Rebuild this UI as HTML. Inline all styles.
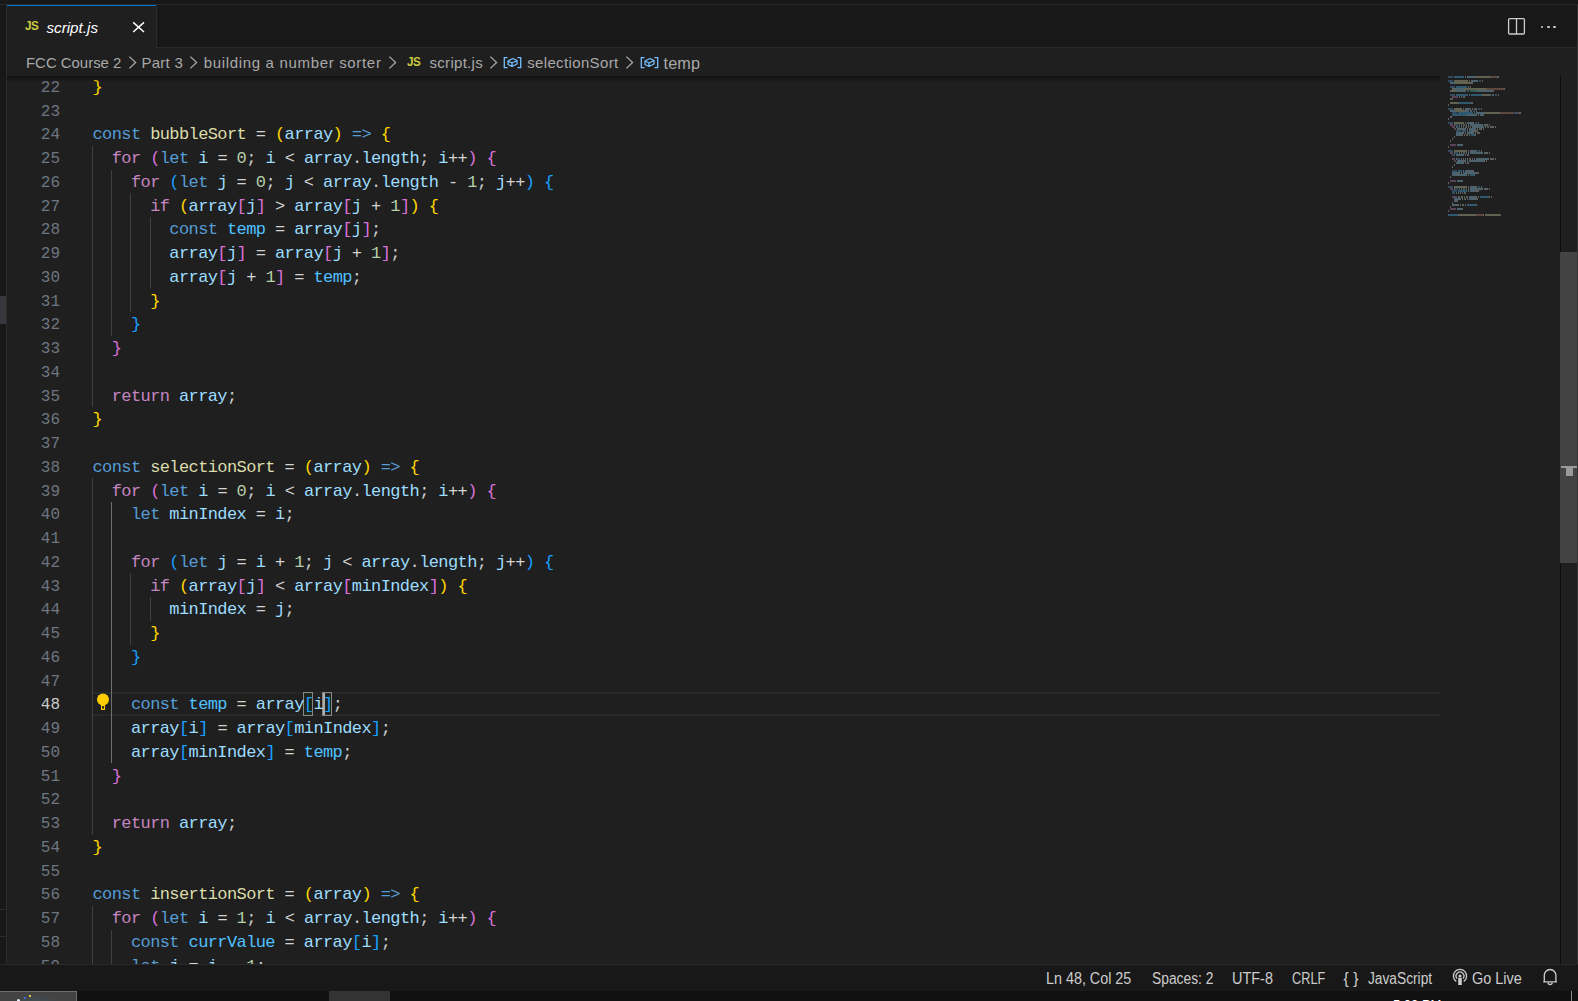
<!DOCTYPE html>
<html><head><meta charset="utf-8"><style>
html,body{margin:0;padding:0;}
body{width:1578px;height:1001px;overflow:hidden;background:#1f1f1f;position:relative;font-family:"Liberation Sans",sans-serif;}
.a{position:absolute;}
.code{position:absolute;left:0;top:0;font-family:"Liberation Mono",monospace;font-size:17px;letter-spacing:-0.6px;white-space:pre;line-height:23.75px;height:23.75px;}
.ln{position:absolute;left:0;width:60.0px;text-align:right;font-family:"Liberation Mono",monospace;font-size:16px;line-height:23.75px;color:#6E7681;white-space:pre;}
.bc{position:absolute;top:0;height:28px;line-height:28px;color:#A9A9A9;font-size:15px;white-space:pre;}
.sb{position:absolute;top:965px;height:26px;line-height:26px;color:#CCCCCC;font-size:14.5px;white-space:pre;}
</style></head><body>

<div class="a" style="left:0;top:0;width:1578px;height:5px;background:#181818"></div>
<div class="a" style="left:0;top:4px;width:1578px;height:1px;background:#2b2b2b"></div>
<div class="a" style="left:0;top:5px;width:6px;height:986px;background:#181818"></div>
<div class="a" style="left:6px;top:5px;width:1px;height:959px;background:#2b2b2b"></div>
<div class="a" style="left:0;top:296px;width:6px;height:28px;background:#37373d"></div>
<div class="a" style="left:0;top:909px;width:6px;height:1px;background:#2b2b2b"></div>
<div class="a" style="left:0;top:936px;width:6px;height:1px;background:#2b2b2b"></div>
<div class="a" style="left:157px;top:5px;width:1421px;height:42px;background:#181818"></div>
<div class="a" style="left:157px;top:47px;width:1421px;height:1px;background:#2b2b2b"></div>
<div class="a" style="left:156px;top:5px;width:1px;height:43px;background:#2b2b2b"></div>
<div class="a" style="left:7px;top:5px;width:149px;height:1px;background:#0078d4"></div>
<div class="a" style="left:24.6px;top:15.6px;height:20px;line-height:20px;font-size:13.6px;font-weight:bold;color:#cbcb41;letter-spacing:-0.6px;transform:scaleX(0.86);transform-origin:0 0">JS</div>
<div class="a" style="left:46.5px;top:17px;height:22px;line-height:22px;font-size:15.2px;font-style:italic;color:#ffffff">script.js</div>
<svg class="a" style="left:131px;top:20px" width="15" height="15" viewBox="0 0 15 15"><path d="M2.2 2.4 L13 12 M13 2.4 L2.2 12" stroke="#ffffff" stroke-width="1.5" fill="none"/></svg>
<svg class="a" style="left:1506px;top:16px" width="21" height="21" viewBox="0 0 21 21"><rect x="2.6" y="2.6" width="15.8" height="15.4" rx="1" ry="1" stroke="#cccccc" stroke-width="1.3" fill="none"/><line x1="10.5" y1="2.6" x2="10.5" y2="18" stroke="#cccccc" stroke-width="1.3"/></svg>
<div class="a" style="left:1540.9px;top:25.7px;width:2.6px;height:2.6px;border-radius:50%;background:#cccccc"></div>
<div class="a" style="left:1547.1000000000001px;top:25.7px;width:2.6px;height:2.6px;border-radius:50%;background:#cccccc"></div>
<div class="a" style="left:1553.3px;top:25.7px;width:2.6px;height:2.6px;border-radius:50%;background:#cccccc"></div>
<div class="bc" style="left:26.31px;top:49.3px;font-size:15px;letter-spacing:0.0px;transform:scaleX(0.9945);transform-origin:0 0">FCC Course 2</div>
<div class="bc" style="left:141.40px;top:49.3px;font-size:15px;letter-spacing:0.285px;transform:scaleX(1.0);transform-origin:0 0">Part 3</div>
<div class="bc" style="left:203.70px;top:49.3px;font-size:15px;letter-spacing:0.671px;transform:scaleX(1.0);transform-origin:0 0">building a number sorter</div>
<div class="bc" style="left:429.50px;top:49.3px;font-size:15px;letter-spacing:0.295px;transform:scaleX(1.0);transform-origin:0 0">script.js</div>
<div class="bc" style="left:527.20px;top:49.3px;font-size:15px;letter-spacing:0.355px;transform:scaleX(1.0);transform-origin:0 0">selectionSort</div>
<div class="bc" style="left:663.50px;top:49.3px;font-size:16.2px;letter-spacing:0.172px;transform:scaleX(1.0);transform-origin:0 0">temp</div>
<svg class="a" style="left:128.0px;top:55px" width="10" height="16" viewBox="0 0 10 16"><path d="M1.4 1.6 L7.6 7.5 L1.4 13.4" stroke="#A9A9A9" stroke-width="1.3" fill="none"/></svg>
<svg class="a" style="left:189.2px;top:55px" width="10" height="16" viewBox="0 0 10 16"><path d="M1.4 1.6 L7.6 7.5 L1.4 13.4" stroke="#A9A9A9" stroke-width="1.3" fill="none"/></svg>
<svg class="a" style="left:388.4px;top:55px" width="10" height="16" viewBox="0 0 10 16"><path d="M1.4 1.6 L7.6 7.5 L1.4 13.4" stroke="#A9A9A9" stroke-width="1.3" fill="none"/></svg>
<svg class="a" style="left:489.0px;top:55px" width="10" height="16" viewBox="0 0 10 16"><path d="M1.4 1.6 L7.6 7.5 L1.4 13.4" stroke="#A9A9A9" stroke-width="1.3" fill="none"/></svg>
<svg class="a" style="left:625.0px;top:55px" width="10" height="16" viewBox="0 0 10 16"><path d="M1.4 1.6 L7.6 7.5 L1.4 13.4" stroke="#A9A9A9" stroke-width="1.3" fill="none"/></svg>
<div class="a" style="left:406.7px;top:51.6px;height:20px;line-height:20px;font-size:13.6px;font-weight:bold;color:#cbcb41;letter-spacing:-0.6px;transform:scaleX(0.86);transform-origin:0 0">JS</div>
<svg class="a" style="left:503.3px;top:55px" width="19" height="15" viewBox="0 0 19 15"><path d="M4.5 2.7 H1.3 V12.6 H4.5 M14.5 2.7 H17.7 V12.6 H14.5" stroke="#75BEFF" stroke-width="1.3" fill="none"/><path d="M5 6 L10 3.5 L14 5.5 V9 L9 11.5 L5 9.5 Z M5 6 L9 8 L14 5.5 M9 8 V11.5" stroke="#75BEFF" stroke-width="1.3" fill="none" stroke-linejoin="round"/></svg>
<svg class="a" style="left:639.5px;top:55px" width="19" height="15" viewBox="0 0 19 15"><path d="M4.5 2.7 H1.3 V12.6 H4.5 M14.5 2.7 H17.7 V12.6 H14.5" stroke="#75BEFF" stroke-width="1.3" fill="none"/><path d="M5 6 L10 3.5 L14 5.5 V9 L9 11.5 L5 9.5 Z M5 6 L9 8 L14 5.5 M9 8 V11.5" stroke="#75BEFF" stroke-width="1.3" fill="none" stroke-linejoin="round"/></svg>
<div class="a" style="left:7px;top:76px;width:1553px;height:888px;overflow:hidden">
<div class="a" style="left:85.5px;top:616.1px;width:1347.5px;height:23.75px;box-sizing:border-box;border-top:2px solid #282828;border-bottom:2px solid #282828"></div>
<div class="a" style="left:85.00px;top:-48.90px;width:1px;height:23.75px;background:#404040"></div>
<div class="a" style="left:104.20px;top:-48.90px;width:1px;height:23.75px;background:#404040"></div>
<div class="a" style="left:85.00px;top:-25.15px;width:1px;height:23.75px;background:#404040"></div>
<div class="a" style="left:85.00px;top:69.85px;width:1px;height:23.75px;background:#404040"></div>
<div class="a" style="left:85.00px;top:93.60px;width:1px;height:23.75px;background:#404040"></div>
<div class="a" style="left:104.20px;top:93.60px;width:1px;height:23.75px;background:#404040"></div>
<div class="a" style="left:85.00px;top:117.35px;width:1px;height:23.75px;background:#404040"></div>
<div class="a" style="left:104.20px;top:117.35px;width:1px;height:23.75px;background:#404040"></div>
<div class="a" style="left:123.40px;top:117.35px;width:1px;height:23.75px;background:#404040"></div>
<div class="a" style="left:85.00px;top:141.10px;width:1px;height:23.75px;background:#404040"></div>
<div class="a" style="left:104.20px;top:141.10px;width:1px;height:23.75px;background:#404040"></div>
<div class="a" style="left:123.40px;top:141.10px;width:1px;height:23.75px;background:#404040"></div>
<div class="a" style="left:142.60px;top:141.10px;width:1px;height:23.75px;background:#404040"></div>
<div class="a" style="left:85.00px;top:164.85px;width:1px;height:23.75px;background:#404040"></div>
<div class="a" style="left:104.20px;top:164.85px;width:1px;height:23.75px;background:#404040"></div>
<div class="a" style="left:123.40px;top:164.85px;width:1px;height:23.75px;background:#404040"></div>
<div class="a" style="left:142.60px;top:164.85px;width:1px;height:23.75px;background:#404040"></div>
<div class="a" style="left:85.00px;top:188.60px;width:1px;height:23.75px;background:#404040"></div>
<div class="a" style="left:104.20px;top:188.60px;width:1px;height:23.75px;background:#404040"></div>
<div class="a" style="left:123.40px;top:188.60px;width:1px;height:23.75px;background:#404040"></div>
<div class="a" style="left:142.60px;top:188.60px;width:1px;height:23.75px;background:#404040"></div>
<div class="a" style="left:85.00px;top:212.35px;width:1px;height:23.75px;background:#404040"></div>
<div class="a" style="left:104.20px;top:212.35px;width:1px;height:23.75px;background:#404040"></div>
<div class="a" style="left:123.40px;top:212.35px;width:1px;height:23.75px;background:#404040"></div>
<div class="a" style="left:85.00px;top:236.10px;width:1px;height:23.75px;background:#404040"></div>
<div class="a" style="left:104.20px;top:236.10px;width:1px;height:23.75px;background:#404040"></div>
<div class="a" style="left:85.00px;top:259.85px;width:1px;height:23.75px;background:#404040"></div>
<div class="a" style="left:85.00px;top:283.60px;width:1px;height:23.75px;background:#404040"></div>
<div class="a" style="left:85.00px;top:307.35px;width:1px;height:23.75px;background:#404040"></div>
<div class="a" style="left:85.00px;top:402.35px;width:1px;height:23.75px;background:#404040"></div>
<div class="a" style="left:85.00px;top:426.10px;width:1px;height:23.75px;background:#404040"></div>
<div class="a" style="left:104.20px;top:426.10px;width:1px;height:23.75px;background:#707070"></div>
<div class="a" style="left:85.00px;top:449.85px;width:1px;height:23.75px;background:#404040"></div>
<div class="a" style="left:104.20px;top:449.85px;width:1px;height:23.75px;background:#707070"></div>
<div class="a" style="left:85.00px;top:473.60px;width:1px;height:23.75px;background:#404040"></div>
<div class="a" style="left:104.20px;top:473.60px;width:1px;height:23.75px;background:#707070"></div>
<div class="a" style="left:85.00px;top:497.35px;width:1px;height:23.75px;background:#404040"></div>
<div class="a" style="left:104.20px;top:497.35px;width:1px;height:23.75px;background:#707070"></div>
<div class="a" style="left:123.40px;top:497.35px;width:1px;height:23.75px;background:#404040"></div>
<div class="a" style="left:85.00px;top:521.10px;width:1px;height:23.75px;background:#404040"></div>
<div class="a" style="left:104.20px;top:521.10px;width:1px;height:23.75px;background:#707070"></div>
<div class="a" style="left:123.40px;top:521.10px;width:1px;height:23.75px;background:#404040"></div>
<div class="a" style="left:142.60px;top:521.10px;width:1px;height:23.75px;background:#404040"></div>
<div class="a" style="left:85.00px;top:544.85px;width:1px;height:23.75px;background:#404040"></div>
<div class="a" style="left:104.20px;top:544.85px;width:1px;height:23.75px;background:#707070"></div>
<div class="a" style="left:123.40px;top:544.85px;width:1px;height:23.75px;background:#404040"></div>
<div class="a" style="left:85.00px;top:568.60px;width:1px;height:23.75px;background:#404040"></div>
<div class="a" style="left:104.20px;top:568.60px;width:1px;height:23.75px;background:#707070"></div>
<div class="a" style="left:85.00px;top:592.35px;width:1px;height:23.75px;background:#404040"></div>
<div class="a" style="left:104.20px;top:592.35px;width:1px;height:23.75px;background:#707070"></div>
<div class="a" style="left:85.00px;top:616.10px;width:1px;height:23.75px;background:#404040"></div>
<div class="a" style="left:104.20px;top:616.10px;width:1px;height:23.75px;background:#707070"></div>
<div class="a" style="left:85.00px;top:639.85px;width:1px;height:23.75px;background:#404040"></div>
<div class="a" style="left:104.20px;top:639.85px;width:1px;height:23.75px;background:#707070"></div>
<div class="a" style="left:85.00px;top:663.60px;width:1px;height:23.75px;background:#404040"></div>
<div class="a" style="left:104.20px;top:663.60px;width:1px;height:23.75px;background:#707070"></div>
<div class="a" style="left:85.00px;top:687.35px;width:1px;height:23.75px;background:#404040"></div>
<div class="a" style="left:85.00px;top:711.10px;width:1px;height:23.75px;background:#404040"></div>
<div class="a" style="left:85.00px;top:734.85px;width:1px;height:23.75px;background:#404040"></div>
<div class="a" style="left:85.00px;top:829.85px;width:1px;height:23.75px;background:#404040"></div>
<div class="a" style="left:85.00px;top:853.60px;width:1px;height:23.75px;background:#404040"></div>
<div class="a" style="left:104.20px;top:853.60px;width:1px;height:23.75px;background:#404040"></div>
<div class="a" style="left:85.00px;top:877.35px;width:1px;height:23.75px;background:#404040"></div>
<div class="a" style="left:104.20px;top:877.35px;width:1px;height:23.75px;background:#404040"></div>
<div class="a" style="left:85.00px;top:901.10px;width:1px;height:23.75px;background:#404040"></div>
<div class="a" style="left:104.20px;top:901.10px;width:1px;height:23.75px;background:#404040"></div>
<div class="a" style="left:296.10px;top:616.30px;width:10px;height:23.5px;box-sizing:border-box;border:1px solid #888888;background:rgba(0,100,0,0.1)"></div>
<div class="a" style="left:315.30px;top:616.30px;width:10px;height:23.5px;box-sizing:border-box;border:1px solid #888888;background:rgba(0,100,0,0.1)"></div>
<div class="ln" style="top:0.90px;left:-7px;color:#6E7681">22</div>
<div class="code" style="left:85.5px;top:-0.10px"><span style="color:#FFD700">}</span></div>
<div class="ln" style="top:24.65px;left:-7px;color:#6E7681">23</div>
<div class="code" style="left:85.5px;top:23.65px"></div>
<div class="ln" style="top:48.40px;left:-7px;color:#6E7681">24</div>
<div class="code" style="left:85.5px;top:47.40px"><span style="color:#569CD6">const</span> <span style="color:#DCDCAA">bubbleSort</span> <span style="color:#D4D4D4">=</span> <span style="color:#FFD700">(</span><span style="color:#9CDCFE">array</span><span style="color:#FFD700">)</span> <span style="color:#569CD6">=&gt;</span> <span style="color:#FFD700">{</span></div>
<div class="ln" style="top:72.15px;left:-7px;color:#6E7681">25</div>
<div class="code" style="left:85.5px;top:71.15px">  <span style="color:#C586C0">for</span> <span style="color:#DA70D6">(</span><span style="color:#569CD6">let</span> <span style="color:#9CDCFE">i</span> <span style="color:#D4D4D4">=</span> <span style="color:#B5CEA8">0</span><span style="color:#CCCCCC">;</span> <span style="color:#9CDCFE">i</span> <span style="color:#D4D4D4">&lt;</span> <span style="color:#9CDCFE">array</span><span style="color:#CCCCCC">.</span><span style="color:#9CDCFE">length</span><span style="color:#CCCCCC">;</span> <span style="color:#9CDCFE">i</span><span style="color:#D4D4D4">++</span><span style="color:#DA70D6">)</span> <span style="color:#DA70D6">{</span></div>
<div class="ln" style="top:95.90px;left:-7px;color:#6E7681">26</div>
<div class="code" style="left:85.5px;top:94.90px">    <span style="color:#C586C0">for</span> <span style="color:#179FFF">(</span><span style="color:#569CD6">let</span> <span style="color:#9CDCFE">j</span> <span style="color:#D4D4D4">=</span> <span style="color:#B5CEA8">0</span><span style="color:#CCCCCC">;</span> <span style="color:#9CDCFE">j</span> <span style="color:#D4D4D4">&lt;</span> <span style="color:#9CDCFE">array</span><span style="color:#CCCCCC">.</span><span style="color:#9CDCFE">length</span> <span style="color:#D4D4D4">-</span> <span style="color:#B5CEA8">1</span><span style="color:#CCCCCC">;</span> <span style="color:#9CDCFE">j</span><span style="color:#D4D4D4">++</span><span style="color:#179FFF">)</span> <span style="color:#179FFF">{</span></div>
<div class="ln" style="top:119.65px;left:-7px;color:#6E7681">27</div>
<div class="code" style="left:85.5px;top:118.65px">      <span style="color:#C586C0">if</span> <span style="color:#FFD700">(</span><span style="color:#9CDCFE">array</span><span style="color:#DA70D6">[</span><span style="color:#9CDCFE">j</span><span style="color:#DA70D6">]</span> <span style="color:#D4D4D4">&gt;</span> <span style="color:#9CDCFE">array</span><span style="color:#DA70D6">[</span><span style="color:#9CDCFE">j</span> <span style="color:#D4D4D4">+</span> <span style="color:#B5CEA8">1</span><span style="color:#DA70D6">]</span><span style="color:#FFD700">)</span> <span style="color:#FFD700">{</span></div>
<div class="ln" style="top:143.40px;left:-7px;color:#6E7681">28</div>
<div class="code" style="left:85.5px;top:142.40px">        <span style="color:#569CD6">const</span> <span style="color:#4FC1FF">temp</span> <span style="color:#D4D4D4">=</span> <span style="color:#9CDCFE">array</span><span style="color:#DA70D6">[</span><span style="color:#9CDCFE">j</span><span style="color:#DA70D6">]</span><span style="color:#CCCCCC">;</span></div>
<div class="ln" style="top:167.15px;left:-7px;color:#6E7681">29</div>
<div class="code" style="left:85.5px;top:166.15px">        <span style="color:#9CDCFE">array</span><span style="color:#DA70D6">[</span><span style="color:#9CDCFE">j</span><span style="color:#DA70D6">]</span> <span style="color:#D4D4D4">=</span> <span style="color:#9CDCFE">array</span><span style="color:#DA70D6">[</span><span style="color:#9CDCFE">j</span> <span style="color:#D4D4D4">+</span> <span style="color:#B5CEA8">1</span><span style="color:#DA70D6">]</span><span style="color:#CCCCCC">;</span></div>
<div class="ln" style="top:190.90px;left:-7px;color:#6E7681">30</div>
<div class="code" style="left:85.5px;top:189.90px">        <span style="color:#9CDCFE">array</span><span style="color:#DA70D6">[</span><span style="color:#9CDCFE">j</span> <span style="color:#D4D4D4">+</span> <span style="color:#B5CEA8">1</span><span style="color:#DA70D6">]</span> <span style="color:#D4D4D4">=</span> <span style="color:#4FC1FF">temp</span><span style="color:#CCCCCC">;</span></div>
<div class="ln" style="top:214.65px;left:-7px;color:#6E7681">31</div>
<div class="code" style="left:85.5px;top:213.65px">      <span style="color:#FFD700">}</span></div>
<div class="ln" style="top:238.40px;left:-7px;color:#6E7681">32</div>
<div class="code" style="left:85.5px;top:237.40px">    <span style="color:#179FFF">}</span></div>
<div class="ln" style="top:262.15px;left:-7px;color:#6E7681">33</div>
<div class="code" style="left:85.5px;top:261.15px">  <span style="color:#DA70D6">}</span></div>
<div class="ln" style="top:285.90px;left:-7px;color:#6E7681">34</div>
<div class="code" style="left:85.5px;top:284.90px"></div>
<div class="ln" style="top:309.65px;left:-7px;color:#6E7681">35</div>
<div class="code" style="left:85.5px;top:308.65px">  <span style="color:#C586C0">return</span> <span style="color:#9CDCFE">array</span><span style="color:#CCCCCC">;</span></div>
<div class="ln" style="top:333.40px;left:-7px;color:#6E7681">36</div>
<div class="code" style="left:85.5px;top:332.40px"><span style="color:#FFD700">}</span></div>
<div class="ln" style="top:357.15px;left:-7px;color:#6E7681">37</div>
<div class="code" style="left:85.5px;top:356.15px"></div>
<div class="ln" style="top:380.90px;left:-7px;color:#6E7681">38</div>
<div class="code" style="left:85.5px;top:379.90px"><span style="color:#569CD6">const</span> <span style="color:#DCDCAA">selectionSort</span> <span style="color:#D4D4D4">=</span> <span style="color:#FFD700">(</span><span style="color:#9CDCFE">array</span><span style="color:#FFD700">)</span> <span style="color:#569CD6">=&gt;</span> <span style="color:#FFD700">{</span></div>
<div class="ln" style="top:404.65px;left:-7px;color:#6E7681">39</div>
<div class="code" style="left:85.5px;top:403.65px">  <span style="color:#C586C0">for</span> <span style="color:#DA70D6">(</span><span style="color:#569CD6">let</span> <span style="color:#9CDCFE">i</span> <span style="color:#D4D4D4">=</span> <span style="color:#B5CEA8">0</span><span style="color:#CCCCCC">;</span> <span style="color:#9CDCFE">i</span> <span style="color:#D4D4D4">&lt;</span> <span style="color:#9CDCFE">array</span><span style="color:#CCCCCC">.</span><span style="color:#9CDCFE">length</span><span style="color:#CCCCCC">;</span> <span style="color:#9CDCFE">i</span><span style="color:#D4D4D4">++</span><span style="color:#DA70D6">)</span> <span style="color:#DA70D6">{</span></div>
<div class="ln" style="top:428.40px;left:-7px;color:#6E7681">40</div>
<div class="code" style="left:85.5px;top:427.40px">    <span style="color:#569CD6">let</span> <span style="color:#9CDCFE">minIndex</span> <span style="color:#D4D4D4">=</span> <span style="color:#9CDCFE">i</span><span style="color:#CCCCCC">;</span></div>
<div class="ln" style="top:452.15px;left:-7px;color:#6E7681">41</div>
<div class="code" style="left:85.5px;top:451.15px"></div>
<div class="ln" style="top:475.90px;left:-7px;color:#6E7681">42</div>
<div class="code" style="left:85.5px;top:474.90px">    <span style="color:#C586C0">for</span> <span style="color:#179FFF">(</span><span style="color:#569CD6">let</span> <span style="color:#9CDCFE">j</span> <span style="color:#D4D4D4">=</span> <span style="color:#9CDCFE">i</span> <span style="color:#D4D4D4">+</span> <span style="color:#B5CEA8">1</span><span style="color:#CCCCCC">;</span> <span style="color:#9CDCFE">j</span> <span style="color:#D4D4D4">&lt;</span> <span style="color:#9CDCFE">array</span><span style="color:#CCCCCC">.</span><span style="color:#9CDCFE">length</span><span style="color:#CCCCCC">;</span> <span style="color:#9CDCFE">j</span><span style="color:#D4D4D4">++</span><span style="color:#179FFF">)</span> <span style="color:#179FFF">{</span></div>
<div class="ln" style="top:499.65px;left:-7px;color:#6E7681">43</div>
<div class="code" style="left:85.5px;top:498.65px">      <span style="color:#C586C0">if</span> <span style="color:#FFD700">(</span><span style="color:#9CDCFE">array</span><span style="color:#DA70D6">[</span><span style="color:#9CDCFE">j</span><span style="color:#DA70D6">]</span> <span style="color:#D4D4D4">&lt;</span> <span style="color:#9CDCFE">array</span><span style="color:#DA70D6">[</span><span style="color:#9CDCFE">minIndex</span><span style="color:#DA70D6">]</span><span style="color:#FFD700">)</span> <span style="color:#FFD700">{</span></div>
<div class="ln" style="top:523.40px;left:-7px;color:#6E7681">44</div>
<div class="code" style="left:85.5px;top:522.40px">        <span style="color:#9CDCFE">minIndex</span> <span style="color:#D4D4D4">=</span> <span style="color:#9CDCFE">j</span><span style="color:#CCCCCC">;</span></div>
<div class="ln" style="top:547.15px;left:-7px;color:#6E7681">45</div>
<div class="code" style="left:85.5px;top:546.15px">      <span style="color:#FFD700">}</span></div>
<div class="ln" style="top:570.90px;left:-7px;color:#6E7681">46</div>
<div class="code" style="left:85.5px;top:569.90px">    <span style="color:#179FFF">}</span></div>
<div class="ln" style="top:594.65px;left:-7px;color:#6E7681">47</div>
<div class="code" style="left:85.5px;top:593.65px"></div>
<div class="ln" style="top:618.40px;left:-7px;color:#CCCCCC">48</div>
<div class="code" style="left:85.5px;top:617.40px">    <span style="color:#569CD6">const</span> <span style="color:#4FC1FF">temp</span> <span style="color:#D4D4D4">=</span> <span style="color:#9CDCFE">array</span><span style="color:#179FFF">[</span><span style="color:#9CDCFE">i</span><span style="color:#179FFF">]</span><span style="color:#CCCCCC">;</span></div>
<div class="ln" style="top:642.15px;left:-7px;color:#6E7681">49</div>
<div class="code" style="left:85.5px;top:641.15px">    <span style="color:#9CDCFE">array</span><span style="color:#179FFF">[</span><span style="color:#9CDCFE">i</span><span style="color:#179FFF">]</span> <span style="color:#D4D4D4">=</span> <span style="color:#9CDCFE">array</span><span style="color:#179FFF">[</span><span style="color:#9CDCFE">minIndex</span><span style="color:#179FFF">]</span><span style="color:#CCCCCC">;</span></div>
<div class="ln" style="top:665.90px;left:-7px;color:#6E7681">50</div>
<div class="code" style="left:85.5px;top:664.90px">    <span style="color:#9CDCFE">array</span><span style="color:#179FFF">[</span><span style="color:#9CDCFE">minIndex</span><span style="color:#179FFF">]</span> <span style="color:#D4D4D4">=</span> <span style="color:#4FC1FF">temp</span><span style="color:#CCCCCC">;</span></div>
<div class="ln" style="top:689.65px;left:-7px;color:#6E7681">51</div>
<div class="code" style="left:85.5px;top:688.65px">  <span style="color:#DA70D6">}</span></div>
<div class="ln" style="top:713.40px;left:-7px;color:#6E7681">52</div>
<div class="code" style="left:85.5px;top:712.40px"></div>
<div class="ln" style="top:737.15px;left:-7px;color:#6E7681">53</div>
<div class="code" style="left:85.5px;top:736.15px">  <span style="color:#C586C0">return</span> <span style="color:#9CDCFE">array</span><span style="color:#CCCCCC">;</span></div>
<div class="ln" style="top:760.90px;left:-7px;color:#6E7681">54</div>
<div class="code" style="left:85.5px;top:759.90px"><span style="color:#FFD700">}</span></div>
<div class="ln" style="top:784.65px;left:-7px;color:#6E7681">55</div>
<div class="code" style="left:85.5px;top:783.65px"></div>
<div class="ln" style="top:808.40px;left:-7px;color:#6E7681">56</div>
<div class="code" style="left:85.5px;top:807.40px"><span style="color:#569CD6">const</span> <span style="color:#DCDCAA">insertionSort</span> <span style="color:#D4D4D4">=</span> <span style="color:#FFD700">(</span><span style="color:#9CDCFE">array</span><span style="color:#FFD700">)</span> <span style="color:#569CD6">=&gt;</span> <span style="color:#FFD700">{</span></div>
<div class="ln" style="top:832.15px;left:-7px;color:#6E7681">57</div>
<div class="code" style="left:85.5px;top:831.15px">  <span style="color:#C586C0">for</span> <span style="color:#DA70D6">(</span><span style="color:#569CD6">let</span> <span style="color:#9CDCFE">i</span> <span style="color:#D4D4D4">=</span> <span style="color:#B5CEA8">1</span><span style="color:#CCCCCC">;</span> <span style="color:#9CDCFE">i</span> <span style="color:#D4D4D4">&lt;</span> <span style="color:#9CDCFE">array</span><span style="color:#CCCCCC">.</span><span style="color:#9CDCFE">length</span><span style="color:#CCCCCC">;</span> <span style="color:#9CDCFE">i</span><span style="color:#D4D4D4">++</span><span style="color:#DA70D6">)</span> <span style="color:#DA70D6">{</span></div>
<div class="ln" style="top:855.90px;left:-7px;color:#6E7681">58</div>
<div class="code" style="left:85.5px;top:854.90px">    <span style="color:#569CD6">const</span> <span style="color:#4FC1FF">currValue</span> <span style="color:#D4D4D4">=</span> <span style="color:#9CDCFE">array</span><span style="color:#179FFF">[</span><span style="color:#9CDCFE">i</span><span style="color:#179FFF">]</span><span style="color:#CCCCCC">;</span></div>
<div class="ln" style="top:879.65px;left:-7px;color:#6E7681">59</div>
<div class="code" style="left:85.5px;top:878.65px">    <span style="color:#569CD6">let</span> <span style="color:#9CDCFE">j</span> <span style="color:#D4D4D4">=</span> <span style="color:#9CDCFE">i</span> <span style="color:#D4D4D4">-</span> <span style="color:#B5CEA8">1</span><span style="color:#CCCCCC">;</span></div>
<div class="a" style="left:315.90px;top:617.10px;width:2px;height:21.75px;background:#AEAFAD"></div>
<svg class="a" style="left:89px;top:616.60px" width="14" height="19" viewBox="0 0 14 19"><circle cx="7" cy="6.5" r="6" fill="#FFCC00"/><path d="M3.6 10 L5 12 V17 H9 V12 L10.4 10 Z" fill="#FFCC00"/><rect x="6" y="13.2" width="2" height="2.4" fill="#1f1f1f"/></svg>
<div class="a" style="left:0;top:0;width:1433px;height:6px;background:linear-gradient(#101010,rgba(31,31,31,0))"></div>
</div>
<svg class="a" style="left:1440px;top:76px" width="120" height="150"><rect x="8" y="0.2" width="5" height="1.6" fill="#569CD6" fill-opacity="0.45"/><rect x="14" y="0.2" width="10" height="1.6" fill="#4FC1FF" fill-opacity="0.45"/><rect x="25" y="0.2" width="1" height="1.6" fill="#D4D4D4" fill-opacity="0.45"/><rect x="27" y="0.2" width="8" height="1.6" fill="#9CDCFE" fill-opacity="0.45"/><rect x="35" y="0.2" width="1" height="1.6" fill="#CCCCCC" fill-opacity="0.45"/><rect x="36" y="0.2" width="14" height="1.6" fill="#DCDCAA" fill-opacity="0.45"/><rect x="50" y="0.2" width="1" height="1.6" fill="#CCCCCC" fill-opacity="0.45"/><rect x="51" y="0.2" width="6" height="1.6" fill="#CE9178" fill-opacity="0.45"/><rect x="57" y="0.2" width="1" height="1.6" fill="#CCCCCC" fill-opacity="0.45"/><rect x="58" y="0.2" width="1" height="1.6" fill="#CCCCCC" fill-opacity="0.45"/><rect x="8" y="4.2" width="5" height="1.6" fill="#569CD6" fill-opacity="0.45"/><rect x="14" y="4.2" width="14" height="1.6" fill="#DCDCAA" fill-opacity="0.45"/><rect x="29" y="4.2" width="1" height="1.6" fill="#D4D4D4" fill-opacity="0.45"/><rect x="31" y="4.2" width="1" height="1.6" fill="#CCCCCC" fill-opacity="0.45"/><rect x="32" y="4.2" width="5" height="1.6" fill="#9CDCFE" fill-opacity="0.45"/><rect x="37" y="4.2" width="1" height="1.6" fill="#CCCCCC" fill-opacity="0.45"/><rect x="39" y="4.2" width="2" height="1.6" fill="#569CD6" fill-opacity="0.45"/><rect x="42" y="4.2" width="1" height="1.6" fill="#CCCCCC" fill-opacity="0.45"/><rect x="10" y="6.2" width="5" height="1.6" fill="#9CDCFE" fill-opacity="0.45"/><rect x="15" y="6.2" width="1" height="1.6" fill="#CCCCCC" fill-opacity="0.45"/><rect x="16" y="6.2" width="14" height="1.6" fill="#DCDCAA" fill-opacity="0.45"/><rect x="30" y="6.2" width="1" height="1.6" fill="#CCCCCC" fill-opacity="0.45"/><rect x="31" y="6.2" width="1" height="1.6" fill="#CCCCCC" fill-opacity="0.45"/><rect x="32" y="6.2" width="1" height="1.6" fill="#CCCCCC" fill-opacity="0.45"/><rect x="10" y="10.2" width="5" height="1.6" fill="#569CD6" fill-opacity="0.45"/><rect x="16" y="10.2" width="11" height="1.6" fill="#4FC1FF" fill-opacity="0.45"/><rect x="28" y="10.2" width="1" height="1.6" fill="#D4D4D4" fill-opacity="0.45"/><rect x="30" y="10.2" width="1" height="1.6" fill="#CCCCCC" fill-opacity="0.45"/><rect x="12" y="12.2" width="3" height="1.6" fill="#D4D4D4" fill-opacity="0.45"/><rect x="15" y="12.2" width="8" height="1.6" fill="#9CDCFE" fill-opacity="0.45"/><rect x="23" y="12.2" width="1" height="1.6" fill="#CCCCCC" fill-opacity="0.45"/><rect x="24" y="12.2" width="22" height="1.6" fill="#DCDCAA" fill-opacity="0.45"/><rect x="46" y="12.2" width="1" height="1.6" fill="#CCCCCC" fill-opacity="0.45"/><rect x="47" y="12.2" width="17" height="1.6" fill="#CE9178" fill-opacity="0.45"/><rect x="64" y="12.2" width="1" height="1.6" fill="#CCCCCC" fill-opacity="0.45"/><rect x="10" y="14.2" width="1" height="1.6" fill="#CCCCCC" fill-opacity="0.45"/><rect x="11" y="14.2" width="1" height="1.6" fill="#CCCCCC" fill-opacity="0.45"/><rect x="12" y="14.2" width="3" height="1.6" fill="#DCDCAA" fill-opacity="0.45"/><rect x="15" y="14.2" width="1" height="1.6" fill="#CCCCCC" fill-opacity="0.45"/><rect x="16" y="14.2" width="1" height="1.6" fill="#CCCCCC" fill-opacity="0.45"/><rect x="17" y="14.2" width="8" height="1.6" fill="#9CDCFE" fill-opacity="0.45"/><rect x="25" y="14.2" width="1" height="1.6" fill="#CCCCCC" fill-opacity="0.45"/><rect x="27" y="14.2" width="2" height="1.6" fill="#569CD6" fill-opacity="0.45"/><rect x="30" y="14.2" width="6" height="1.6" fill="#4EC9B0" fill-opacity="0.45"/><rect x="36" y="14.2" width="1" height="1.6" fill="#CCCCCC" fill-opacity="0.45"/><rect x="37" y="14.2" width="8" height="1.6" fill="#9CDCFE" fill-opacity="0.45"/><rect x="45" y="14.2" width="1" height="1.6" fill="#CCCCCC" fill-opacity="0.45"/><rect x="46" y="14.2" width="5" height="1.6" fill="#9CDCFE" fill-opacity="0.45"/><rect x="51" y="14.2" width="1" height="1.6" fill="#CCCCCC" fill-opacity="0.45"/><rect x="52" y="14.2" width="1" height="1.6" fill="#CCCCCC" fill-opacity="0.45"/><rect x="53" y="14.2" width="1" height="1.6" fill="#CCCCCC" fill-opacity="0.45"/><rect x="10" y="18.2" width="5" height="1.6" fill="#569CD6" fill-opacity="0.45"/><rect x="16" y="18.2" width="12" height="1.6" fill="#4FC1FF" fill-opacity="0.45"/><rect x="29" y="18.2" width="1" height="1.6" fill="#D4D4D4" fill-opacity="0.45"/><rect x="31" y="18.2" width="11" height="1.6" fill="#4FC1FF" fill-opacity="0.45"/><rect x="42" y="18.2" width="1" height="1.6" fill="#CCCCCC" fill-opacity="0.45"/><rect x="43" y="18.2" width="4" height="1.6" fill="#DCDCAA" fill-opacity="0.45"/><rect x="47" y="18.2" width="1" height="1.6" fill="#CCCCCC" fill-opacity="0.45"/><rect x="48" y="18.2" width="1" height="1.6" fill="#CCCCCC" fill-opacity="0.45"/><rect x="49" y="18.2" width="1" height="1.6" fill="#9CDCFE" fill-opacity="0.45"/><rect x="50" y="18.2" width="1" height="1.6" fill="#CCCCCC" fill-opacity="0.45"/><rect x="52" y="18.2" width="1" height="1.6" fill="#9CDCFE" fill-opacity="0.45"/><rect x="53" y="18.2" width="1" height="1.6" fill="#CCCCCC" fill-opacity="0.45"/><rect x="55" y="18.2" width="2" height="1.6" fill="#569CD6" fill-opacity="0.45"/><rect x="58" y="18.2" width="1" height="1.6" fill="#CCCCCC" fill-opacity="0.45"/><rect x="12" y="20.2" width="6" height="1.6" fill="#C586C0" fill-opacity="0.45"/><rect x="19" y="20.2" width="1" height="1.6" fill="#9CDCFE" fill-opacity="0.45"/><rect x="21" y="20.2" width="1" height="1.6" fill="#D4D4D4" fill-opacity="0.45"/><rect x="23" y="20.2" width="1" height="1.6" fill="#9CDCFE" fill-opacity="0.45"/><rect x="24" y="20.2" width="1" height="1.6" fill="#CCCCCC" fill-opacity="0.45"/><rect x="10" y="22.2" width="1" height="1.6" fill="#CCCCCC" fill-opacity="0.45"/><rect x="11" y="22.2" width="1" height="1.6" fill="#CCCCCC" fill-opacity="0.45"/><rect x="12" y="22.2" width="1" height="1.6" fill="#CCCCCC" fill-opacity="0.45"/><rect x="10" y="26.2" width="8" height="1.6" fill="#DCDCAA" fill-opacity="0.45"/><rect x="18" y="26.2" width="1" height="1.6" fill="#CCCCCC" fill-opacity="0.45"/><rect x="19" y="26.2" width="12" height="1.6" fill="#4FC1FF" fill-opacity="0.45"/><rect x="31" y="26.2" width="1" height="1.6" fill="#CCCCCC" fill-opacity="0.45"/><rect x="32" y="26.2" width="1" height="1.6" fill="#CCCCCC" fill-opacity="0.45"/><rect x="8" y="28.2" width="1" height="1.6" fill="#CCCCCC" fill-opacity="0.45"/><rect x="8" y="32.2" width="5" height="1.6" fill="#569CD6" fill-opacity="0.45"/><rect x="14" y="32.2" width="8" height="1.6" fill="#DCDCAA" fill-opacity="0.45"/><rect x="23" y="32.2" width="1" height="1.6" fill="#D4D4D4" fill-opacity="0.45"/><rect x="25" y="32.2" width="1" height="1.6" fill="#CCCCCC" fill-opacity="0.45"/><rect x="26" y="32.2" width="5" height="1.6" fill="#9CDCFE" fill-opacity="0.45"/><rect x="32" y="32.2" width="1" height="1.6" fill="#D4D4D4" fill-opacity="0.45"/><rect x="34" y="32.2" width="1" height="1.6" fill="#CCCCCC" fill-opacity="0.45"/><rect x="35" y="32.2" width="1" height="1.6" fill="#CCCCCC" fill-opacity="0.45"/><rect x="36" y="32.2" width="1" height="1.6" fill="#CCCCCC" fill-opacity="0.45"/><rect x="38" y="32.2" width="2" height="1.6" fill="#569CD6" fill-opacity="0.45"/><rect x="41" y="32.2" width="1" height="1.6" fill="#CCCCCC" fill-opacity="0.45"/><rect x="10" y="34.2" width="5" height="1.6" fill="#9CDCFE" fill-opacity="0.45"/><rect x="15" y="34.2" width="1" height="1.6" fill="#CCCCCC" fill-opacity="0.45"/><rect x="16" y="34.2" width="7" height="1.6" fill="#DCDCAA" fill-opacity="0.45"/><rect x="23" y="34.2" width="1" height="1.6" fill="#CCCCCC" fill-opacity="0.45"/><rect x="24" y="34.2" width="1" height="1.6" fill="#CCCCCC" fill-opacity="0.45"/><rect x="25" y="34.2" width="3" height="1.6" fill="#9CDCFE" fill-opacity="0.45"/><rect x="28" y="34.2" width="1" height="1.6" fill="#CCCCCC" fill-opacity="0.45"/><rect x="30" y="34.2" width="1" height="1.6" fill="#9CDCFE" fill-opacity="0.45"/><rect x="31" y="34.2" width="1" height="1.6" fill="#CCCCCC" fill-opacity="0.45"/><rect x="33" y="34.2" width="2" height="1.6" fill="#569CD6" fill-opacity="0.45"/><rect x="36" y="34.2" width="1" height="1.6" fill="#CCCCCC" fill-opacity="0.45"/><rect x="12" y="36.2" width="5" height="1.6" fill="#569CD6" fill-opacity="0.45"/><rect x="18" y="36.2" width="15" height="1.6" fill="#4FC1FF" fill-opacity="0.45"/><rect x="34" y="36.2" width="1" height="1.6" fill="#D4D4D4" fill-opacity="0.45"/><rect x="36" y="36.2" width="8" height="1.6" fill="#9CDCFE" fill-opacity="0.45"/><rect x="44" y="36.2" width="1" height="1.6" fill="#CCCCCC" fill-opacity="0.45"/><rect x="45" y="36.2" width="14" height="1.6" fill="#DCDCAA" fill-opacity="0.45"/><rect x="59" y="36.2" width="1" height="1.6" fill="#CCCCCC" fill-opacity="0.45"/><rect x="60" y="36.2" width="14" height="1.6" fill="#CE9178" fill-opacity="0.45"/><rect x="74" y="36.2" width="2" height="1.6" fill="#569CD6" fill-opacity="0.45"/><rect x="76" y="36.2" width="1" height="1.6" fill="#9CDCFE" fill-opacity="0.45"/><rect x="77" y="36.2" width="1" height="1.6" fill="#569CD6" fill-opacity="0.45"/><rect x="78" y="36.2" width="1" height="1.6" fill="#CE9178" fill-opacity="0.45"/><rect x="79" y="36.2" width="1" height="1.6" fill="#CCCCCC" fill-opacity="0.45"/><rect x="80" y="36.2" width="1" height="1.6" fill="#CCCCCC" fill-opacity="0.45"/><rect x="12" y="38.2" width="15" height="1.6" fill="#4FC1FF" fill-opacity="0.45"/><rect x="27" y="38.2" width="1" height="1.6" fill="#CCCCCC" fill-opacity="0.45"/><rect x="28" y="38.2" width="9" height="1.6" fill="#9CDCFE" fill-opacity="0.45"/><rect x="38" y="38.2" width="1" height="1.6" fill="#D4D4D4" fill-opacity="0.45"/><rect x="40" y="38.2" width="3" height="1.6" fill="#9CDCFE" fill-opacity="0.45"/><rect x="43" y="38.2" width="1" height="1.6" fill="#CCCCCC" fill-opacity="0.45"/><rect x="10" y="40.2" width="1" height="1.6" fill="#CCCCCC" fill-opacity="0.45"/><rect x="11" y="40.2" width="1" height="1.6" fill="#CCCCCC" fill-opacity="0.45"/><rect x="8" y="42.2" width="1" height="1.6" fill="#CCCCCC" fill-opacity="0.45"/><rect x="8" y="46.2" width="5" height="1.6" fill="#569CD6" fill-opacity="0.45"/><rect x="14" y="46.2" width="10" height="1.6" fill="#DCDCAA" fill-opacity="0.45"/><rect x="25" y="46.2" width="1" height="1.6" fill="#D4D4D4" fill-opacity="0.45"/><rect x="27" y="46.2" width="1" height="1.6" fill="#CCCCCC" fill-opacity="0.45"/><rect x="28" y="46.2" width="5" height="1.6" fill="#9CDCFE" fill-opacity="0.45"/><rect x="33" y="46.2" width="1" height="1.6" fill="#CCCCCC" fill-opacity="0.45"/><rect x="35" y="46.2" width="2" height="1.6" fill="#569CD6" fill-opacity="0.45"/><rect x="38" y="46.2" width="1" height="1.6" fill="#CCCCCC" fill-opacity="0.45"/><rect x="10" y="48.2" width="3" height="1.6" fill="#C586C0" fill-opacity="0.45"/><rect x="14" y="48.2" width="1" height="1.6" fill="#CCCCCC" fill-opacity="0.45"/><rect x="15" y="48.2" width="3" height="1.6" fill="#569CD6" fill-opacity="0.45"/><rect x="19" y="48.2" width="1" height="1.6" fill="#9CDCFE" fill-opacity="0.45"/><rect x="21" y="48.2" width="1" height="1.6" fill="#D4D4D4" fill-opacity="0.45"/><rect x="23" y="48.2" width="1" height="1.6" fill="#B5CEA8" fill-opacity="0.45"/><rect x="24" y="48.2" width="1" height="1.6" fill="#CCCCCC" fill-opacity="0.45"/><rect x="26" y="48.2" width="1" height="1.6" fill="#9CDCFE" fill-opacity="0.45"/><rect x="28" y="48.2" width="1" height="1.6" fill="#D4D4D4" fill-opacity="0.45"/><rect x="30" y="48.2" width="5" height="1.6" fill="#9CDCFE" fill-opacity="0.45"/><rect x="35" y="48.2" width="1" height="1.6" fill="#CCCCCC" fill-opacity="0.45"/><rect x="36" y="48.2" width="6" height="1.6" fill="#9CDCFE" fill-opacity="0.45"/><rect x="42" y="48.2" width="1" height="1.6" fill="#CCCCCC" fill-opacity="0.45"/><rect x="44" y="48.2" width="1" height="1.6" fill="#9CDCFE" fill-opacity="0.45"/><rect x="45" y="48.2" width="2" height="1.6" fill="#D4D4D4" fill-opacity="0.45"/><rect x="47" y="48.2" width="1" height="1.6" fill="#CCCCCC" fill-opacity="0.45"/><rect x="49" y="48.2" width="1" height="1.6" fill="#CCCCCC" fill-opacity="0.45"/><rect x="12" y="50.2" width="3" height="1.6" fill="#C586C0" fill-opacity="0.45"/><rect x="16" y="50.2" width="1" height="1.6" fill="#CCCCCC" fill-opacity="0.45"/><rect x="17" y="50.2" width="3" height="1.6" fill="#569CD6" fill-opacity="0.45"/><rect x="21" y="50.2" width="1" height="1.6" fill="#9CDCFE" fill-opacity="0.45"/><rect x="23" y="50.2" width="1" height="1.6" fill="#D4D4D4" fill-opacity="0.45"/><rect x="25" y="50.2" width="1" height="1.6" fill="#B5CEA8" fill-opacity="0.45"/><rect x="26" y="50.2" width="1" height="1.6" fill="#CCCCCC" fill-opacity="0.45"/><rect x="28" y="50.2" width="1" height="1.6" fill="#9CDCFE" fill-opacity="0.45"/><rect x="30" y="50.2" width="1" height="1.6" fill="#D4D4D4" fill-opacity="0.45"/><rect x="32" y="50.2" width="5" height="1.6" fill="#9CDCFE" fill-opacity="0.45"/><rect x="37" y="50.2" width="1" height="1.6" fill="#CCCCCC" fill-opacity="0.45"/><rect x="38" y="50.2" width="6" height="1.6" fill="#9CDCFE" fill-opacity="0.45"/><rect x="45" y="50.2" width="1" height="1.6" fill="#D4D4D4" fill-opacity="0.45"/><rect x="47" y="50.2" width="1" height="1.6" fill="#B5CEA8" fill-opacity="0.45"/><rect x="48" y="50.2" width="1" height="1.6" fill="#CCCCCC" fill-opacity="0.45"/><rect x="50" y="50.2" width="1" height="1.6" fill="#9CDCFE" fill-opacity="0.45"/><rect x="51" y="50.2" width="2" height="1.6" fill="#D4D4D4" fill-opacity="0.45"/><rect x="53" y="50.2" width="1" height="1.6" fill="#CCCCCC" fill-opacity="0.45"/><rect x="55" y="50.2" width="1" height="1.6" fill="#CCCCCC" fill-opacity="0.45"/><rect x="14" y="52.2" width="2" height="1.6" fill="#C586C0" fill-opacity="0.45"/><rect x="17" y="52.2" width="1" height="1.6" fill="#CCCCCC" fill-opacity="0.45"/><rect x="18" y="52.2" width="5" height="1.6" fill="#9CDCFE" fill-opacity="0.45"/><rect x="23" y="52.2" width="1" height="1.6" fill="#CCCCCC" fill-opacity="0.45"/><rect x="24" y="52.2" width="1" height="1.6" fill="#9CDCFE" fill-opacity="0.45"/><rect x="25" y="52.2" width="1" height="1.6" fill="#CCCCCC" fill-opacity="0.45"/><rect x="27" y="52.2" width="1" height="1.6" fill="#D4D4D4" fill-opacity="0.45"/><rect x="29" y="52.2" width="5" height="1.6" fill="#9CDCFE" fill-opacity="0.45"/><rect x="34" y="52.2" width="1" height="1.6" fill="#CCCCCC" fill-opacity="0.45"/><rect x="35" y="52.2" width="1" height="1.6" fill="#9CDCFE" fill-opacity="0.45"/><rect x="37" y="52.2" width="1" height="1.6" fill="#D4D4D4" fill-opacity="0.45"/><rect x="39" y="52.2" width="1" height="1.6" fill="#B5CEA8" fill-opacity="0.45"/><rect x="40" y="52.2" width="1" height="1.6" fill="#CCCCCC" fill-opacity="0.45"/><rect x="41" y="52.2" width="1" height="1.6" fill="#CCCCCC" fill-opacity="0.45"/><rect x="43" y="52.2" width="1" height="1.6" fill="#CCCCCC" fill-opacity="0.45"/><rect x="16" y="54.2" width="5" height="1.6" fill="#569CD6" fill-opacity="0.45"/><rect x="22" y="54.2" width="4" height="1.6" fill="#4FC1FF" fill-opacity="0.45"/><rect x="27" y="54.2" width="1" height="1.6" fill="#D4D4D4" fill-opacity="0.45"/><rect x="29" y="54.2" width="5" height="1.6" fill="#9CDCFE" fill-opacity="0.45"/><rect x="34" y="54.2" width="1" height="1.6" fill="#CCCCCC" fill-opacity="0.45"/><rect x="35" y="54.2" width="1" height="1.6" fill="#9CDCFE" fill-opacity="0.45"/><rect x="36" y="54.2" width="1" height="1.6" fill="#CCCCCC" fill-opacity="0.45"/><rect x="37" y="54.2" width="1" height="1.6" fill="#CCCCCC" fill-opacity="0.45"/><rect x="16" y="56.2" width="5" height="1.6" fill="#9CDCFE" fill-opacity="0.45"/><rect x="21" y="56.2" width="1" height="1.6" fill="#CCCCCC" fill-opacity="0.45"/><rect x="22" y="56.2" width="1" height="1.6" fill="#9CDCFE" fill-opacity="0.45"/><rect x="23" y="56.2" width="1" height="1.6" fill="#CCCCCC" fill-opacity="0.45"/><rect x="25" y="56.2" width="1" height="1.6" fill="#D4D4D4" fill-opacity="0.45"/><rect x="27" y="56.2" width="5" height="1.6" fill="#9CDCFE" fill-opacity="0.45"/><rect x="32" y="56.2" width="1" height="1.6" fill="#CCCCCC" fill-opacity="0.45"/><rect x="33" y="56.2" width="1" height="1.6" fill="#9CDCFE" fill-opacity="0.45"/><rect x="35" y="56.2" width="1" height="1.6" fill="#D4D4D4" fill-opacity="0.45"/><rect x="37" y="56.2" width="1" height="1.6" fill="#B5CEA8" fill-opacity="0.45"/><rect x="38" y="56.2" width="1" height="1.6" fill="#CCCCCC" fill-opacity="0.45"/><rect x="39" y="56.2" width="1" height="1.6" fill="#CCCCCC" fill-opacity="0.45"/><rect x="16" y="58.2" width="5" height="1.6" fill="#9CDCFE" fill-opacity="0.45"/><rect x="21" y="58.2" width="1" height="1.6" fill="#CCCCCC" fill-opacity="0.45"/><rect x="22" y="58.2" width="1" height="1.6" fill="#9CDCFE" fill-opacity="0.45"/><rect x="24" y="58.2" width="1" height="1.6" fill="#D4D4D4" fill-opacity="0.45"/><rect x="26" y="58.2" width="1" height="1.6" fill="#B5CEA8" fill-opacity="0.45"/><rect x="27" y="58.2" width="1" height="1.6" fill="#CCCCCC" fill-opacity="0.45"/><rect x="29" y="58.2" width="1" height="1.6" fill="#D4D4D4" fill-opacity="0.45"/><rect x="31" y="58.2" width="4" height="1.6" fill="#4FC1FF" fill-opacity="0.45"/><rect x="35" y="58.2" width="1" height="1.6" fill="#CCCCCC" fill-opacity="0.45"/><rect x="14" y="60.2" width="1" height="1.6" fill="#CCCCCC" fill-opacity="0.45"/><rect x="12" y="62.2" width="1" height="1.6" fill="#CCCCCC" fill-opacity="0.45"/><rect x="10" y="64.2" width="1" height="1.6" fill="#CCCCCC" fill-opacity="0.45"/><rect x="10" y="68.2" width="6" height="1.6" fill="#C586C0" fill-opacity="0.45"/><rect x="17" y="68.2" width="5" height="1.6" fill="#9CDCFE" fill-opacity="0.45"/><rect x="22" y="68.2" width="1" height="1.6" fill="#CCCCCC" fill-opacity="0.45"/><rect x="8" y="70.2" width="1" height="1.6" fill="#CCCCCC" fill-opacity="0.45"/><rect x="8" y="74.2" width="5" height="1.6" fill="#569CD6" fill-opacity="0.45"/><rect x="14" y="74.2" width="13" height="1.6" fill="#DCDCAA" fill-opacity="0.45"/><rect x="28" y="74.2" width="1" height="1.6" fill="#D4D4D4" fill-opacity="0.45"/><rect x="30" y="74.2" width="1" height="1.6" fill="#CCCCCC" fill-opacity="0.45"/><rect x="31" y="74.2" width="5" height="1.6" fill="#9CDCFE" fill-opacity="0.45"/><rect x="36" y="74.2" width="1" height="1.6" fill="#CCCCCC" fill-opacity="0.45"/><rect x="38" y="74.2" width="2" height="1.6" fill="#569CD6" fill-opacity="0.45"/><rect x="41" y="74.2" width="1" height="1.6" fill="#CCCCCC" fill-opacity="0.45"/><rect x="10" y="76.2" width="3" height="1.6" fill="#C586C0" fill-opacity="0.45"/><rect x="14" y="76.2" width="1" height="1.6" fill="#CCCCCC" fill-opacity="0.45"/><rect x="15" y="76.2" width="3" height="1.6" fill="#569CD6" fill-opacity="0.45"/><rect x="19" y="76.2" width="1" height="1.6" fill="#9CDCFE" fill-opacity="0.45"/><rect x="21" y="76.2" width="1" height="1.6" fill="#D4D4D4" fill-opacity="0.45"/><rect x="23" y="76.2" width="1" height="1.6" fill="#B5CEA8" fill-opacity="0.45"/><rect x="24" y="76.2" width="1" height="1.6" fill="#CCCCCC" fill-opacity="0.45"/><rect x="26" y="76.2" width="1" height="1.6" fill="#9CDCFE" fill-opacity="0.45"/><rect x="28" y="76.2" width="1" height="1.6" fill="#D4D4D4" fill-opacity="0.45"/><rect x="30" y="76.2" width="5" height="1.6" fill="#9CDCFE" fill-opacity="0.45"/><rect x="35" y="76.2" width="1" height="1.6" fill="#CCCCCC" fill-opacity="0.45"/><rect x="36" y="76.2" width="6" height="1.6" fill="#9CDCFE" fill-opacity="0.45"/><rect x="42" y="76.2" width="1" height="1.6" fill="#CCCCCC" fill-opacity="0.45"/><rect x="44" y="76.2" width="1" height="1.6" fill="#9CDCFE" fill-opacity="0.45"/><rect x="45" y="76.2" width="2" height="1.6" fill="#D4D4D4" fill-opacity="0.45"/><rect x="47" y="76.2" width="1" height="1.6" fill="#CCCCCC" fill-opacity="0.45"/><rect x="49" y="76.2" width="1" height="1.6" fill="#CCCCCC" fill-opacity="0.45"/><rect x="12" y="78.2" width="3" height="1.6" fill="#569CD6" fill-opacity="0.45"/><rect x="16" y="78.2" width="8" height="1.6" fill="#9CDCFE" fill-opacity="0.45"/><rect x="25" y="78.2" width="1" height="1.6" fill="#D4D4D4" fill-opacity="0.45"/><rect x="27" y="78.2" width="1" height="1.6" fill="#9CDCFE" fill-opacity="0.45"/><rect x="28" y="78.2" width="1" height="1.6" fill="#CCCCCC" fill-opacity="0.45"/><rect x="12" y="82.2" width="3" height="1.6" fill="#C586C0" fill-opacity="0.45"/><rect x="16" y="82.2" width="1" height="1.6" fill="#CCCCCC" fill-opacity="0.45"/><rect x="17" y="82.2" width="3" height="1.6" fill="#569CD6" fill-opacity="0.45"/><rect x="21" y="82.2" width="1" height="1.6" fill="#9CDCFE" fill-opacity="0.45"/><rect x="23" y="82.2" width="1" height="1.6" fill="#D4D4D4" fill-opacity="0.45"/><rect x="25" y="82.2" width="1" height="1.6" fill="#9CDCFE" fill-opacity="0.45"/><rect x="27" y="82.2" width="1" height="1.6" fill="#D4D4D4" fill-opacity="0.45"/><rect x="29" y="82.2" width="1" height="1.6" fill="#B5CEA8" fill-opacity="0.45"/><rect x="30" y="82.2" width="1" height="1.6" fill="#CCCCCC" fill-opacity="0.45"/><rect x="32" y="82.2" width="1" height="1.6" fill="#9CDCFE" fill-opacity="0.45"/><rect x="34" y="82.2" width="1" height="1.6" fill="#D4D4D4" fill-opacity="0.45"/><rect x="36" y="82.2" width="5" height="1.6" fill="#9CDCFE" fill-opacity="0.45"/><rect x="41" y="82.2" width="1" height="1.6" fill="#CCCCCC" fill-opacity="0.45"/><rect x="42" y="82.2" width="6" height="1.6" fill="#9CDCFE" fill-opacity="0.45"/><rect x="48" y="82.2" width="1" height="1.6" fill="#CCCCCC" fill-opacity="0.45"/><rect x="50" y="82.2" width="1" height="1.6" fill="#9CDCFE" fill-opacity="0.45"/><rect x="51" y="82.2" width="2" height="1.6" fill="#D4D4D4" fill-opacity="0.45"/><rect x="53" y="82.2" width="1" height="1.6" fill="#CCCCCC" fill-opacity="0.45"/><rect x="55" y="82.2" width="1" height="1.6" fill="#CCCCCC" fill-opacity="0.45"/><rect x="14" y="84.2" width="2" height="1.6" fill="#C586C0" fill-opacity="0.45"/><rect x="17" y="84.2" width="1" height="1.6" fill="#CCCCCC" fill-opacity="0.45"/><rect x="18" y="84.2" width="5" height="1.6" fill="#9CDCFE" fill-opacity="0.45"/><rect x="23" y="84.2" width="1" height="1.6" fill="#CCCCCC" fill-opacity="0.45"/><rect x="24" y="84.2" width="1" height="1.6" fill="#9CDCFE" fill-opacity="0.45"/><rect x="25" y="84.2" width="1" height="1.6" fill="#CCCCCC" fill-opacity="0.45"/><rect x="27" y="84.2" width="1" height="1.6" fill="#D4D4D4" fill-opacity="0.45"/><rect x="29" y="84.2" width="5" height="1.6" fill="#9CDCFE" fill-opacity="0.45"/><rect x="34" y="84.2" width="1" height="1.6" fill="#CCCCCC" fill-opacity="0.45"/><rect x="35" y="84.2" width="8" height="1.6" fill="#9CDCFE" fill-opacity="0.45"/><rect x="43" y="84.2" width="1" height="1.6" fill="#CCCCCC" fill-opacity="0.45"/><rect x="44" y="84.2" width="1" height="1.6" fill="#CCCCCC" fill-opacity="0.45"/><rect x="46" y="84.2" width="1" height="1.6" fill="#CCCCCC" fill-opacity="0.45"/><rect x="16" y="86.2" width="8" height="1.6" fill="#9CDCFE" fill-opacity="0.45"/><rect x="25" y="86.2" width="1" height="1.6" fill="#D4D4D4" fill-opacity="0.45"/><rect x="27" y="86.2" width="1" height="1.6" fill="#9CDCFE" fill-opacity="0.45"/><rect x="28" y="86.2" width="1" height="1.6" fill="#CCCCCC" fill-opacity="0.45"/><rect x="14" y="88.2" width="1" height="1.6" fill="#CCCCCC" fill-opacity="0.45"/><rect x="12" y="90.2" width="1" height="1.6" fill="#CCCCCC" fill-opacity="0.45"/><rect x="12" y="94.2" width="5" height="1.6" fill="#569CD6" fill-opacity="0.45"/><rect x="18" y="94.2" width="4" height="1.6" fill="#4FC1FF" fill-opacity="0.45"/><rect x="23" y="94.2" width="1" height="1.6" fill="#D4D4D4" fill-opacity="0.45"/><rect x="25" y="94.2" width="5" height="1.6" fill="#9CDCFE" fill-opacity="0.45"/><rect x="30" y="94.2" width="1" height="1.6" fill="#CCCCCC" fill-opacity="0.45"/><rect x="31" y="94.2" width="1" height="1.6" fill="#9CDCFE" fill-opacity="0.45"/><rect x="32" y="94.2" width="1" height="1.6" fill="#CCCCCC" fill-opacity="0.45"/><rect x="33" y="94.2" width="1" height="1.6" fill="#CCCCCC" fill-opacity="0.45"/><rect x="12" y="96.2" width="5" height="1.6" fill="#9CDCFE" fill-opacity="0.45"/><rect x="17" y="96.2" width="1" height="1.6" fill="#CCCCCC" fill-opacity="0.45"/><rect x="18" y="96.2" width="1" height="1.6" fill="#9CDCFE" fill-opacity="0.45"/><rect x="19" y="96.2" width="1" height="1.6" fill="#CCCCCC" fill-opacity="0.45"/><rect x="21" y="96.2" width="1" height="1.6" fill="#D4D4D4" fill-opacity="0.45"/><rect x="23" y="96.2" width="5" height="1.6" fill="#9CDCFE" fill-opacity="0.45"/><rect x="28" y="96.2" width="1" height="1.6" fill="#CCCCCC" fill-opacity="0.45"/><rect x="29" y="96.2" width="8" height="1.6" fill="#9CDCFE" fill-opacity="0.45"/><rect x="37" y="96.2" width="1" height="1.6" fill="#CCCCCC" fill-opacity="0.45"/><rect x="38" y="96.2" width="1" height="1.6" fill="#CCCCCC" fill-opacity="0.45"/><rect x="12" y="98.2" width="5" height="1.6" fill="#9CDCFE" fill-opacity="0.45"/><rect x="17" y="98.2" width="1" height="1.6" fill="#CCCCCC" fill-opacity="0.45"/><rect x="18" y="98.2" width="8" height="1.6" fill="#9CDCFE" fill-opacity="0.45"/><rect x="26" y="98.2" width="1" height="1.6" fill="#CCCCCC" fill-opacity="0.45"/><rect x="28" y="98.2" width="1" height="1.6" fill="#D4D4D4" fill-opacity="0.45"/><rect x="30" y="98.2" width="4" height="1.6" fill="#4FC1FF" fill-opacity="0.45"/><rect x="34" y="98.2" width="1" height="1.6" fill="#CCCCCC" fill-opacity="0.45"/><rect x="10" y="100.2" width="1" height="1.6" fill="#CCCCCC" fill-opacity="0.45"/><rect x="10" y="104.2" width="6" height="1.6" fill="#C586C0" fill-opacity="0.45"/><rect x="17" y="104.2" width="5" height="1.6" fill="#9CDCFE" fill-opacity="0.45"/><rect x="22" y="104.2" width="1" height="1.6" fill="#CCCCCC" fill-opacity="0.45"/><rect x="8" y="106.2" width="1" height="1.6" fill="#CCCCCC" fill-opacity="0.45"/><rect x="8" y="110.2" width="5" height="1.6" fill="#569CD6" fill-opacity="0.45"/><rect x="14" y="110.2" width="13" height="1.6" fill="#DCDCAA" fill-opacity="0.45"/><rect x="28" y="110.2" width="1" height="1.6" fill="#D4D4D4" fill-opacity="0.45"/><rect x="30" y="110.2" width="1" height="1.6" fill="#CCCCCC" fill-opacity="0.45"/><rect x="31" y="110.2" width="5" height="1.6" fill="#9CDCFE" fill-opacity="0.45"/><rect x="36" y="110.2" width="1" height="1.6" fill="#CCCCCC" fill-opacity="0.45"/><rect x="38" y="110.2" width="2" height="1.6" fill="#569CD6" fill-opacity="0.45"/><rect x="41" y="110.2" width="1" height="1.6" fill="#CCCCCC" fill-opacity="0.45"/><rect x="10" y="112.2" width="3" height="1.6" fill="#C586C0" fill-opacity="0.45"/><rect x="14" y="112.2" width="1" height="1.6" fill="#CCCCCC" fill-opacity="0.45"/><rect x="15" y="112.2" width="3" height="1.6" fill="#569CD6" fill-opacity="0.45"/><rect x="19" y="112.2" width="1" height="1.6" fill="#9CDCFE" fill-opacity="0.45"/><rect x="21" y="112.2" width="1" height="1.6" fill="#D4D4D4" fill-opacity="0.45"/><rect x="23" y="112.2" width="1" height="1.6" fill="#B5CEA8" fill-opacity="0.45"/><rect x="24" y="112.2" width="1" height="1.6" fill="#CCCCCC" fill-opacity="0.45"/><rect x="26" y="112.2" width="1" height="1.6" fill="#9CDCFE" fill-opacity="0.45"/><rect x="28" y="112.2" width="1" height="1.6" fill="#D4D4D4" fill-opacity="0.45"/><rect x="30" y="112.2" width="5" height="1.6" fill="#9CDCFE" fill-opacity="0.45"/><rect x="35" y="112.2" width="1" height="1.6" fill="#CCCCCC" fill-opacity="0.45"/><rect x="36" y="112.2" width="6" height="1.6" fill="#9CDCFE" fill-opacity="0.45"/><rect x="42" y="112.2" width="1" height="1.6" fill="#CCCCCC" fill-opacity="0.45"/><rect x="44" y="112.2" width="1" height="1.6" fill="#9CDCFE" fill-opacity="0.45"/><rect x="45" y="112.2" width="2" height="1.6" fill="#D4D4D4" fill-opacity="0.45"/><rect x="47" y="112.2" width="1" height="1.6" fill="#CCCCCC" fill-opacity="0.45"/><rect x="49" y="112.2" width="1" height="1.6" fill="#CCCCCC" fill-opacity="0.45"/><rect x="12" y="114.2" width="5" height="1.6" fill="#569CD6" fill-opacity="0.45"/><rect x="18" y="114.2" width="9" height="1.6" fill="#4FC1FF" fill-opacity="0.45"/><rect x="28" y="114.2" width="1" height="1.6" fill="#D4D4D4" fill-opacity="0.45"/><rect x="30" y="114.2" width="5" height="1.6" fill="#9CDCFE" fill-opacity="0.45"/><rect x="35" y="114.2" width="1" height="1.6" fill="#CCCCCC" fill-opacity="0.45"/><rect x="36" y="114.2" width="1" height="1.6" fill="#9CDCFE" fill-opacity="0.45"/><rect x="37" y="114.2" width="1" height="1.6" fill="#CCCCCC" fill-opacity="0.45"/><rect x="38" y="114.2" width="1" height="1.6" fill="#CCCCCC" fill-opacity="0.45"/><rect x="12" y="116.2" width="3" height="1.6" fill="#569CD6" fill-opacity="0.45"/><rect x="16" y="116.2" width="1" height="1.6" fill="#9CDCFE" fill-opacity="0.45"/><rect x="18" y="116.2" width="1" height="1.6" fill="#D4D4D4" fill-opacity="0.45"/><rect x="20" y="116.2" width="1" height="1.6" fill="#9CDCFE" fill-opacity="0.45"/><rect x="22" y="116.2" width="1" height="1.6" fill="#D4D4D4" fill-opacity="0.45"/><rect x="24" y="116.2" width="1" height="1.6" fill="#B5CEA8" fill-opacity="0.45"/><rect x="25" y="116.2" width="1" height="1.6" fill="#CCCCCC" fill-opacity="0.45"/><rect x="12" y="120.2" width="5" height="1.6" fill="#C586C0" fill-opacity="0.45"/><rect x="18" y="120.2" width="1" height="1.6" fill="#CCCCCC" fill-opacity="0.45"/><rect x="19" y="120.2" width="1" height="1.6" fill="#9CDCFE" fill-opacity="0.45"/><rect x="21" y="120.2" width="2" height="1.6" fill="#D4D4D4" fill-opacity="0.45"/><rect x="24" y="120.2" width="1" height="1.6" fill="#B5CEA8" fill-opacity="0.45"/><rect x="26" y="120.2" width="2" height="1.6" fill="#D4D4D4" fill-opacity="0.45"/><rect x="29" y="120.2" width="5" height="1.6" fill="#9CDCFE" fill-opacity="0.45"/><rect x="34" y="120.2" width="1" height="1.6" fill="#CCCCCC" fill-opacity="0.45"/><rect x="35" y="120.2" width="1" height="1.6" fill="#9CDCFE" fill-opacity="0.45"/><rect x="36" y="120.2" width="1" height="1.6" fill="#CCCCCC" fill-opacity="0.45"/><rect x="38" y="120.2" width="1" height="1.6" fill="#D4D4D4" fill-opacity="0.45"/><rect x="40" y="120.2" width="9" height="1.6" fill="#4FC1FF" fill-opacity="0.45"/><rect x="49" y="120.2" width="1" height="1.6" fill="#CCCCCC" fill-opacity="0.45"/><rect x="51" y="120.2" width="1" height="1.6" fill="#CCCCCC" fill-opacity="0.45"/><rect x="14" y="122.2" width="5" height="1.6" fill="#9CDCFE" fill-opacity="0.45"/><rect x="19" y="122.2" width="1" height="1.6" fill="#CCCCCC" fill-opacity="0.45"/><rect x="20" y="122.2" width="1" height="1.6" fill="#9CDCFE" fill-opacity="0.45"/><rect x="22" y="122.2" width="1" height="1.6" fill="#D4D4D4" fill-opacity="0.45"/><rect x="24" y="122.2" width="1" height="1.6" fill="#B5CEA8" fill-opacity="0.45"/><rect x="25" y="122.2" width="1" height="1.6" fill="#CCCCCC" fill-opacity="0.45"/><rect x="27" y="122.2" width="1" height="1.6" fill="#D4D4D4" fill-opacity="0.45"/><rect x="29" y="122.2" width="5" height="1.6" fill="#9CDCFE" fill-opacity="0.45"/><rect x="34" y="122.2" width="1" height="1.6" fill="#CCCCCC" fill-opacity="0.45"/><rect x="35" y="122.2" width="1" height="1.6" fill="#9CDCFE" fill-opacity="0.45"/><rect x="36" y="122.2" width="1" height="1.6" fill="#CCCCCC" fill-opacity="0.45"/><rect x="37" y="122.2" width="1" height="1.6" fill="#CCCCCC" fill-opacity="0.45"/><rect x="14" y="124.2" width="1" height="1.6" fill="#9CDCFE" fill-opacity="0.45"/><rect x="15" y="124.2" width="2" height="1.6" fill="#D4D4D4" fill-opacity="0.45"/><rect x="17" y="124.2" width="1" height="1.6" fill="#CCCCCC" fill-opacity="0.45"/><rect x="12" y="126.2" width="1" height="1.6" fill="#CCCCCC" fill-opacity="0.45"/><rect x="12" y="128.2" width="5" height="1.6" fill="#9CDCFE" fill-opacity="0.45"/><rect x="17" y="128.2" width="1" height="1.6" fill="#CCCCCC" fill-opacity="0.45"/><rect x="18" y="128.2" width="1" height="1.6" fill="#9CDCFE" fill-opacity="0.45"/><rect x="20" y="128.2" width="1" height="1.6" fill="#D4D4D4" fill-opacity="0.45"/><rect x="22" y="128.2" width="1" height="1.6" fill="#B5CEA8" fill-opacity="0.45"/><rect x="23" y="128.2" width="1" height="1.6" fill="#CCCCCC" fill-opacity="0.45"/><rect x="25" y="128.2" width="1" height="1.6" fill="#D4D4D4" fill-opacity="0.45"/><rect x="27" y="128.2" width="9" height="1.6" fill="#4FC1FF" fill-opacity="0.45"/><rect x="36" y="128.2" width="1" height="1.6" fill="#CCCCCC" fill-opacity="0.45"/><rect x="10" y="130.2" width="1" height="1.6" fill="#CCCCCC" fill-opacity="0.45"/><rect x="10" y="132.2" width="6" height="1.6" fill="#C586C0" fill-opacity="0.45"/><rect x="17" y="132.2" width="5" height="1.6" fill="#9CDCFE" fill-opacity="0.45"/><rect x="22" y="132.2" width="1" height="1.6" fill="#CCCCCC" fill-opacity="0.45"/><rect x="8" y="134.2" width="1" height="1.6" fill="#CCCCCC" fill-opacity="0.45"/><rect x="8" y="138.2" width="10" height="1.6" fill="#4FC1FF" fill-opacity="0.45"/><rect x="18" y="138.2" width="1" height="1.6" fill="#CCCCCC" fill-opacity="0.45"/><rect x="19" y="138.2" width="16" height="1.6" fill="#DCDCAA" fill-opacity="0.45"/><rect x="35" y="138.2" width="1" height="1.6" fill="#CCCCCC" fill-opacity="0.45"/><rect x="36" y="138.2" width="7" height="1.6" fill="#CE9178" fill-opacity="0.45"/><rect x="43" y="138.2" width="1" height="1.6" fill="#CCCCCC" fill-opacity="0.45"/><rect x="45" y="138.2" width="14" height="1.6" fill="#DCDCAA" fill-opacity="0.45"/><rect x="59" y="138.2" width="1" height="1.6" fill="#CCCCCC" fill-opacity="0.45"/><rect x="60" y="138.2" width="1" height="1.6" fill="#CCCCCC" fill-opacity="0.45"/></svg>
<div class="a" style="left:1560px;top:76px;width:1px;height:888px;background:#0b0b0b"></div>
<div class="a" style="left:1560px;top:252px;width:17px;height:311px;background:#434343"></div>
<div class="a" style="left:1561px;top:466px;width:16px;height:2px;background:#999"></div>
<div class="a" style="left:1566px;top:468px;width:7px;height:8px;background:#999"></div>
<div class="a" style="left:1577px;top:5px;width:1px;height:986px;background:#333"></div>
<div class="a" style="left:0;top:964px;width:1578px;height:1px;background:#2b2b2b"></div>
<div class="a" style="left:0;top:965px;width:1578px;height:26px;background:#181818"></div>
<div class="sb" style="left:1045.88px;top:965.7px;font-size:15.6px;letter-spacing:0.0px;transform:scaleX(0.9197);transform-origin:0 0">Ln 48, Col 25</div>
<div class="sb" style="left:1151.60px;top:965.7px;font-size:15.6px;letter-spacing:0.0px;transform:scaleX(0.8853);transform-origin:0 0">Spaces: 2</div>
<div class="sb" style="left:1231.97px;top:965.7px;font-size:15.6px;letter-spacing:0.0px;transform:scaleX(0.927);transform-origin:0 0">UTF-8</div>
<div class="sb" style="left:1292.00px;top:965.7px;font-size:15.6px;letter-spacing:0.0px;transform:scaleX(0.816);transform-origin:0 0">CRLF</div>
<div class="sb" style="left:1367.60px;top:965.7px;font-size:15.6px;letter-spacing:0.0px;transform:scaleX(0.8807);transform-origin:0 0">JavaScript</div>
<div class="sb" style="left:1471.60px;top:965.7px;font-size:15.6px;letter-spacing:0.0px;transform:scaleX(0.9271);transform-origin:0 0">Go Live</div>
<div class="sb" style="left:1343.6px;top:965.7px;font-size:15.6px;letter-spacing:0px">{</div>
<div class="sb" style="left:1353.2px;top:965.7px;font-size:15.6px;letter-spacing:0px">}</div>
<svg class="a" style="left:1450.5px;top:967px" width="18" height="19" viewBox="0 0 18 19"><path d="M5.31 14.47 A6.6 6.6 0 1 1 12.69 14.47" stroke="#ccc" stroke-width="1.3" fill="none"/><path d="M6.01 11.51 A3.9 3.9 0 1 1 11.99 11.51" stroke="#ccc" stroke-width="1.3" fill="none"/><circle cx="9" cy="9" r="1.6" fill="#ccc"/><rect x="7.2" y="10.8" width="3.6" height="7.2" fill="#ccc"/></svg>
<svg class="a" style="left:1541px;top:968px" width="19" height="19" viewBox="0 0 19 19"><path d="M3.3 13.2 V7.3 A5.8 5.8 0 0 1 14.9 7.3 V13.2 L15.4 13.9 H2.8 Z" stroke="#ccc" stroke-width="1.3" fill="none" stroke-linejoin="round"/><path d="M7.1 14.6 A2 2 0 0 0 11.1 14.6" stroke="#ccc" stroke-width="1.3" fill="none"/></svg>
<div class="a" style="left:0;top:991px;width:1578px;height:10px;background:#111111"></div>
<div class="a" style="left:0;top:991px;width:77px;height:10px;box-sizing:border-box;border-top:1px solid #6e6e6e;border-right:1px solid #6e6e6e;background:#434343;overflow:hidden"><div class="a" style="left:5px;top:2px;width:60px;height:30px;border-radius:50%;background:radial-gradient(#3d5a60,#434343 70%)"></div><div class="a" style="left:17px;top:7px;width:3px;height:3px;border-radius:50%;background:#eef"></div><div class="a" style="left:24px;top:5px;width:2px;height:2px;background:#4466dd"></div><div class="a" style="left:29px;top:3px;width:2px;height:2px;background:#e8c040"></div></div>
<div class="a" style="left:329px;top:991px;width:61px;height:10px;background:#333333"></div>
<div class="a" style="left:1571px;top:991px;width:1px;height:10px;background:#888"></div>
<div class="a" style="left:1393px;top:997px;height:16px;line-height:16px;font-size:13px;color:#fff;white-space:pre">5:02 PM</div>
</body></html>
